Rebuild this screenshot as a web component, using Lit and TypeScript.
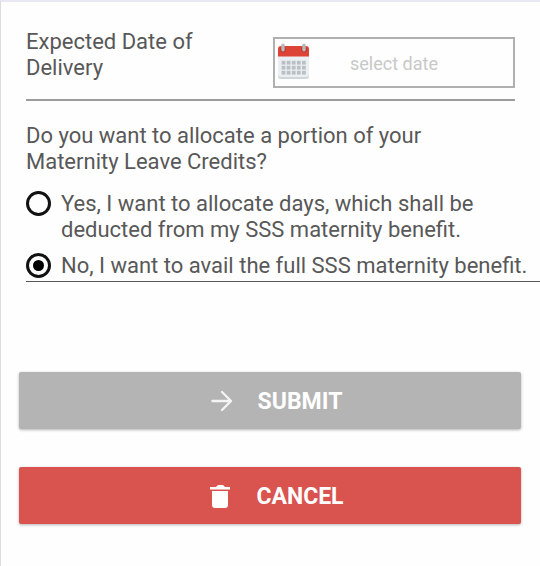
import { LitElement, html, css, svg } from "lit";
import { customElement, state } from "lit/decorators.js";

const dotColumns = [4.6, 9.7, 14.8, 19.9, 25];
const dotRows = [17.8, 22.8, 27.8];

@customElement("app-root")
export class AppRoot extends LitElement {
  @state() private allocation: "yes" | "no" = "no";

  static styles = css`
    :host {
      display: block;
      box-sizing: border-box;
      min-height: 100vh;
      overflow-x: hidden;
      border-top: 2px solid #e8e8f4;
      border-left: 1px solid #dcdcdc;
      background: #fefefe;
      color: #585858;
      font: 22px/26px Roboto, sans-serif;
    }
    *, *::before {
      box-sizing: border-box;
    }
    .form {
      padding: 27px 19px 40px 18px;
    }
    .date-row {
      display: flex;
      align-items: flex-start;
      gap: 16px;
      margin: 0 6px 0 7px;
      padding-bottom: 11px;
      border-bottom: 2px solid #9c9c9c;
    }
    .date-label {
      flex: 1;
    }
    .date-field {
      position: relative;
      width: 49.5%;
      margin-top: 8px;
    }
    .calendar {
      position: absolute;
      left: 4px;
      top: 6px;
      width: 33px;
      height: 37px;
    }
    .date-input {
      display: block;
      width: 100%;
      height: 51px;
      padding: 2px 40px 0;
      border: 2px solid #b0b0b0;
      border-radius: 0;
      background: transparent;
      color: #585858;
      font: 18px/26px Roboto, sans-serif;
      text-align: center;
    }
    .date-input::placeholder {
      color: #c8c8c8;
      opacity: 1;
    }
    .choices {
      margin: 22px -19px 0 7px;
      padding: 0 0 2px;
      border: 0;
      border-bottom: 1px solid #585858;
      min-width: 0;
    }
    .question {
      max-width: 440px;
      margin-bottom: 16px;
      padding: 0;
    }
    .choice {
      display: flex;
      gap: 10px;
      margin-right: 12px;
    }
    .choice + .choice {
      margin-top: 10px;
    }
    .choice-text {
      max-width: 470px;
    }
    .short {
      max-width: 430px;
    }
    .radio {
      appearance: none;
      flex: none;
      display: grid;
      place-items: center;
      width: 25px;
      height: 25px;
      margin: 0;
      border: 3px solid #111;
      border-radius: 50%;
    }
    .radio:checked::before {
      content: "";
      width: 11px;
      height: 11px;
      border-radius: 50%;
      background: #000;
    }
    .actions {
      display: grid;
      gap: 38px;
      margin-top: 90px;
    }
    .button {
      display: flex;
      align-items: center;
      justify-content: center;
      gap: 24px;
      height: 57px;
      padding: 2px 16px 0 28px;
      border: 0;
      border-radius: 2px;
      box-shadow: 0 1px 3px rgba(0, 0, 0, 0.3);
      color: #fff;
      font: 700 23px/26px Roboto, sans-serif;
    }
    .submit {
      background: #b4b4b4;
    }
    .cancel {
      background: #d9534f;
    }
    .icon {
      width: 24px;
      height: 24px;
    }
  `;

  private calendarIcon() {
    return svg`<svg class="calendar" viewBox="0 0 33 37" aria-hidden="true">
      <path d="M1 12h31v21a3 3 0 0 1-3 3H4a3 3 0 0 1-3-3z" fill="#cfd5d9" />
      <path d="M1 12h31v19a3 3 0 0 1-3 3H4a3 3 0 0 1-3-3z" fill="#eceff1" />
      <path d="M1 13.500V6a3 3 0 0 1 3-3h25a3 3 0 0 1 3 3v7.500z" fill="#dd4438" />
      <circle cx="6" cy="6.500" r="3" fill="#c23c32" />
      <circle cx="27" cy="6.500" r="3" fill="#c23c32" />
      <rect x="4.300" y="0.500" width="3.400" height="8" rx="1.700" fill="#b8b9bb" />
      <rect x="25.300" y="0.500" width="3.400" height="8" rx="1.700" fill="#b8b9bb" />
      ${dotRows.map((y) => dotColumns.map((x) => svg`<rect x=${x} y=${y} width="3.800" height="3.800" fill="#b9c1c6" />`))}
    </svg>`;
  }

  render() {
    return html`
      <form class="form" @submit=${(e: Event) => e.preventDefault()}>
        <div class="date-row">
          <label class="date-label" for="delivery">Expected Date of Delivery</label>
          <div class="date-field">
            ${this.calendarIcon()}
            <input class="date-input" id="delivery" type="text" placeholder="select date" />
          </div>
        </div>

        <fieldset class="choices">
          <legend class="question">Do you want to allocate a portion of your Maternity Leave Credits?</legend>
          <label class="choice">
            <input class="radio" type="radio" name="allocation" value="yes"
              .checked=${this.allocation === "yes"} @change=${() => (this.allocation = "yes")} />
            <span class="choice-text short">Yes, I want to allocate days, which shall be deducted from my SSS maternity benefit.</span>
          </label>
          <label class="choice">
            <input class="radio" type="radio" name="allocation" value="no"
              .checked=${this.allocation === "no"} @change=${() => (this.allocation = "no")} />
            <span class="choice-text">No, I want to avail the full SSS maternity benefit.</span>
          </label>
        </fieldset>

        <div class="actions">
          <button class="button submit" type="submit">
            <svg class="icon" viewBox="0 0 24 24" fill="none" stroke="#f4f4f4" stroke-width="2.4" stroke-linecap="round" stroke-linejoin="round" aria-hidden="true">
              <path d="M2.500 11h18.500M12 2l9 9-9 9" />
            </svg>
            SUBMIT
          </button>
          <button class="button cancel" type="button">
            <svg class="icon" viewBox="0 0 24 24" fill="#fff" aria-hidden="true">
              <path d="M2 2h6l2-2h5l2 2h5v2.500H2zM4 6h16v14a3 3 0 0 1-3 3H7a3 3 0 0 1-3-3z" />
            </svg>
            CANCEL
          </button>
        </div>
      </form>
    `;
  }
}
